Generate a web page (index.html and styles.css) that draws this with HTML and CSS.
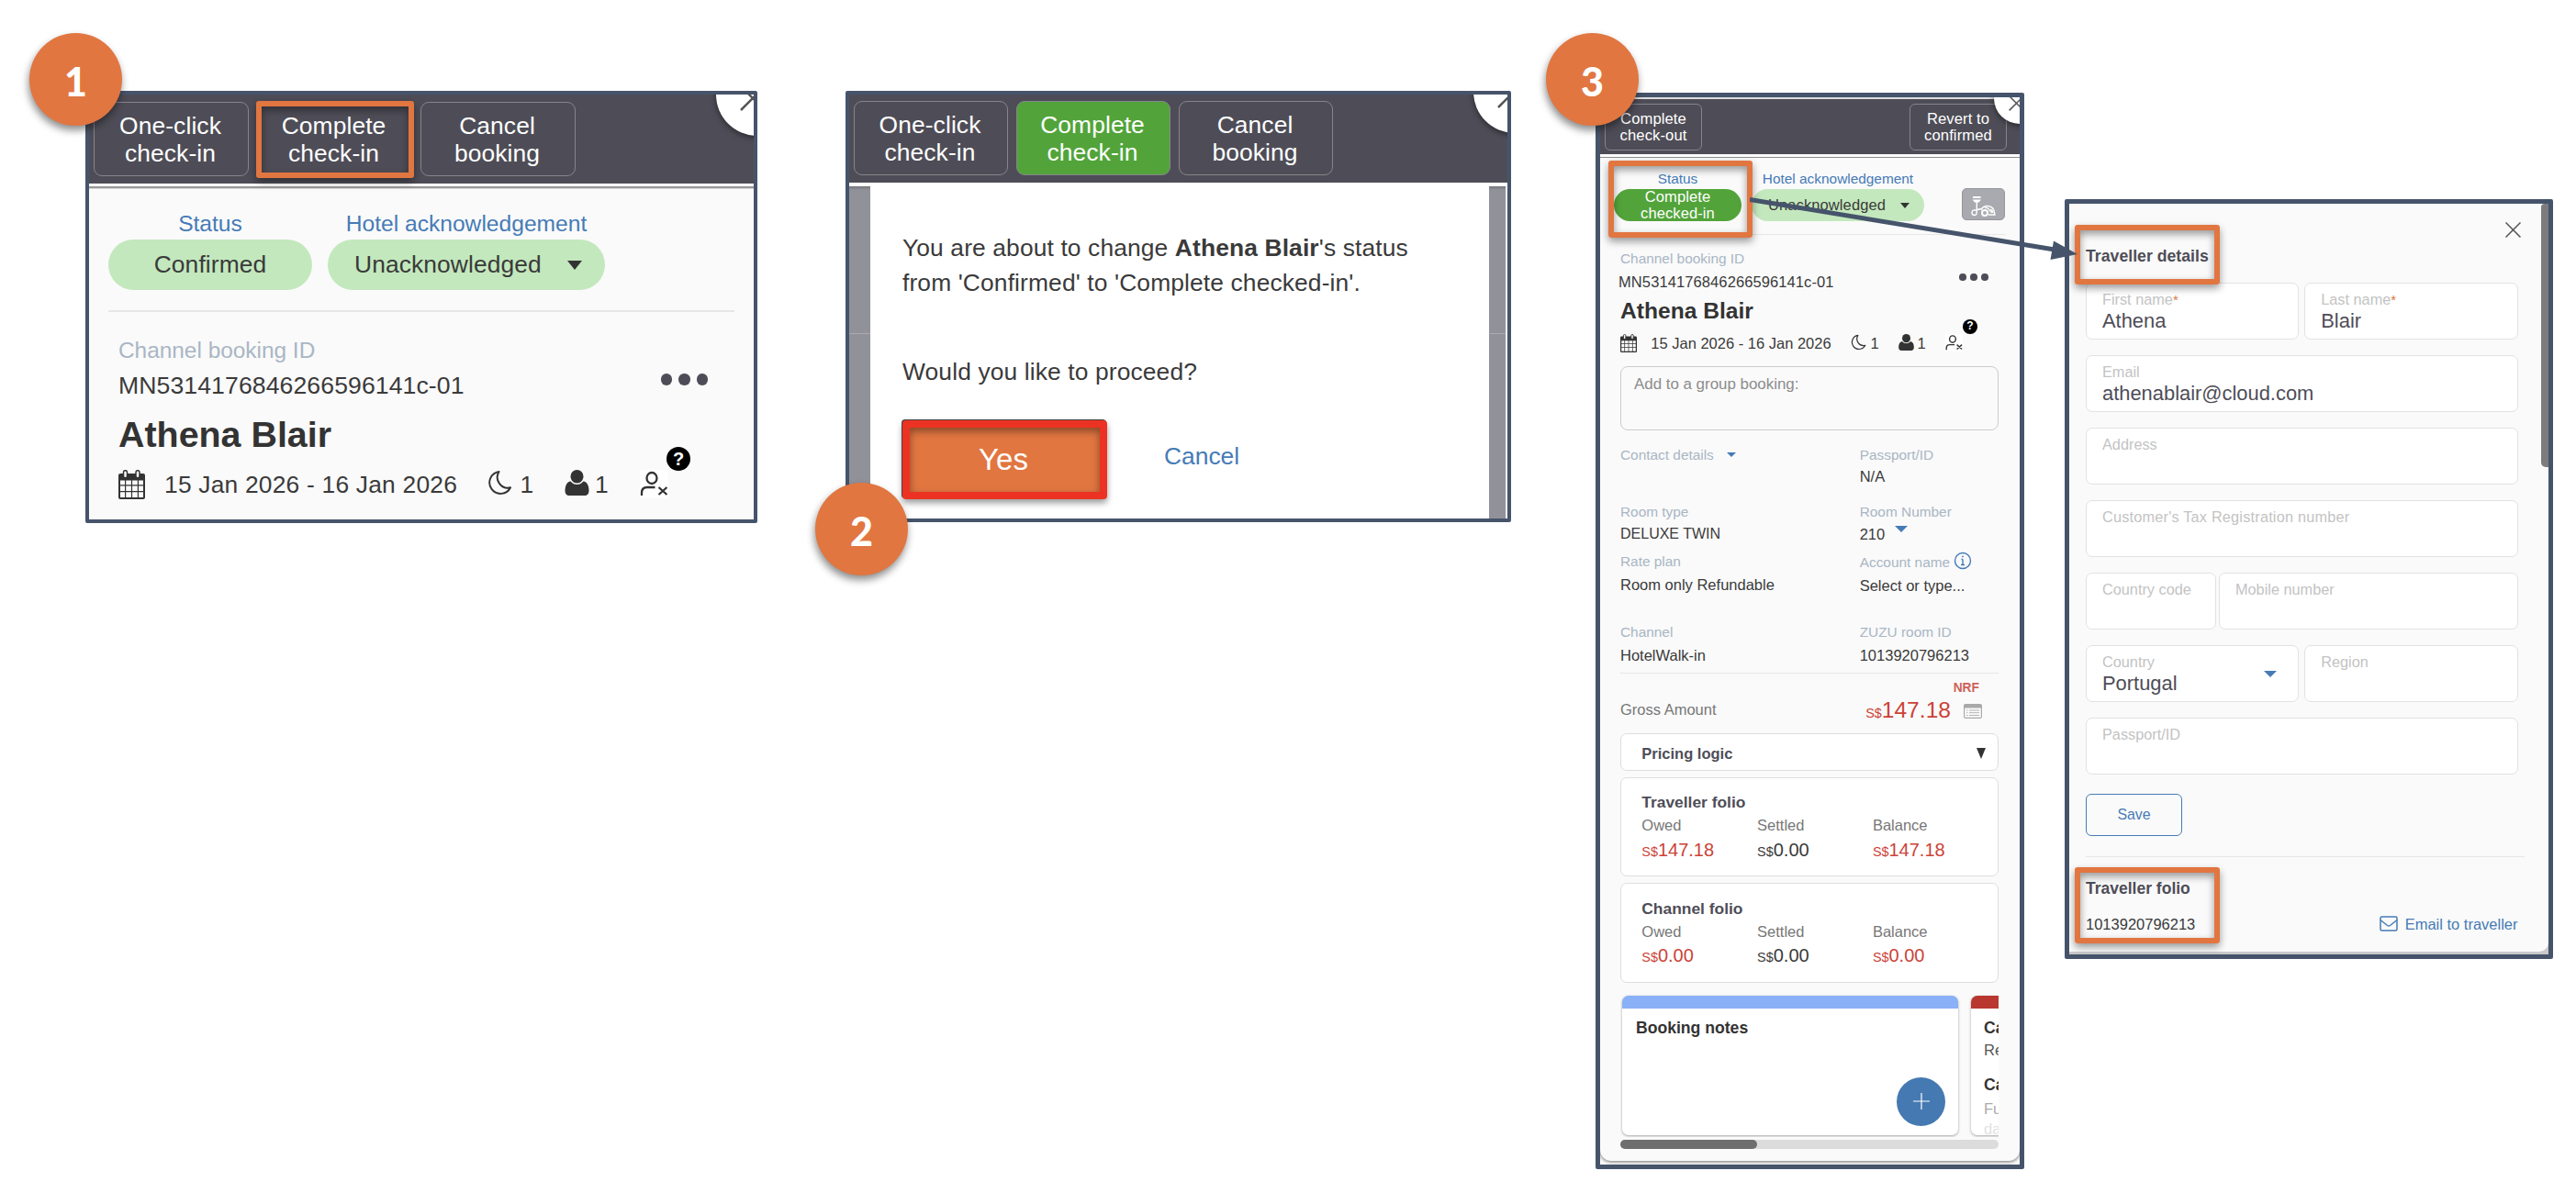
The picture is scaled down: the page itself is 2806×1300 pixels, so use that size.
FILE: index.html
```html
<!DOCTYPE html>
<html lang="en">
<head>
    <meta charset="UTF-8">
    <meta name="viewport" content="width=device-width, initial-scale=1.0">
    <title>Complete check-in</title>
    <link rel="stylesheet" href="styles.css">
</head>
<body>

<!-- Shared icons -->
<svg class="sprite">
    <symbol id="calendar" viewBox="0 0 29 32">
        <path fill="#333" d="M2 4h25a2 2 0 0 1 2 2v24a2 2 0 0 1-2 2H2a2 2 0 0 1-2-2V6a2 2 0 0 1 2-2z"/>
        <path fill="#fafafa" d="M2 11.500h5v4.800H2zM8.200 11.500h5.700v4.800H8.200zM15.100 11.500h5.700v4.800h-5.700zM22 11.500h5v4.800h-5zM2 17.500h5v5.500H2zM8.200 17.500h5.700v5.500H8.200zM15.100 17.500h5.700v5.500h-5.700zM22 17.500h5v5.500h-5zM2 24.200h5V30H2zM8.200 24.200h5.700V30H8.200zM15.100 24.200h5.700V30h-5.700zM22 24.200h5V30h-5z"/>
        <rect x="5.500" y="0.700" width="4" height="8" rx="2" fill="#fafafa" stroke="#333" stroke-width="1.500"/>
        <rect x="19" y="0.700" width="4" height="8" rx="2" fill="#fafafa" stroke="#333" stroke-width="1.500"/>
    </symbol>
    <symbol id="moon" viewBox="0 0 28 28">
        <path fill="none" stroke="#333" stroke-width="2" stroke-linejoin="round" d="M13 1.500A12.500 12.500 0 1 0 26 19.500A12 12 0 0 1 13 1.500z"/>
    </symbol>
    <symbol id="person" viewBox="0 0 26 28">
        <path fill="#333" d="M13 0a7 7 0 0 1 7 7c0 4-3 7.500-7 7.500S6 11 6 7a7 7 0 0 1 7-7z"/>
        <path fill="#333" d="M6 12.500c2 2.500 4.500 3.500 7 3.500s5-1 7-3.500c4 .5 6 4.500 6 10.500 0 3-2 5-4.500 5h-17C2 28 0 26 0 23c0-6 2-10 6-10.500z"/>
    </symbol>
    <symbol id="userx" viewBox="0 0 31 31">
        <path fill="#fff" d="M0 0h31v31H0z"/>
        <g fill="none" stroke="#333" stroke-width="2.300">
            <ellipse cx="13" cy="9" rx="5.500" ry="6"/>
            <path d="M2 28v-3c0-4 2.500-6 6-6h8.500M20.500 19l9 8M29.500 19l-9 8"/>
        </g>
    </symbol>
</svg>

<main class="board">

    <!-- Step 1 -->
    <section class="panel panel-confirm">
        <div class="screen">
            <div class="toolbar">
                <button class="action">One-click<br>check-in</button>
                <button class="action">Complete<br>check-in</button>
                <button class="action">Cancel<br>booking</button>
            </div>
            <div class="rule-bar"></div>
            <div class="booking">
                <div class="status-row">
                    <div class="status">
                        <span class="status-label">Status</span>
                        <span class="pill pill-status">Confirmed</span>
                    </div>
                    <div class="status">
                        <span class="status-label">Hotel acknowledgement</span>
                        <span class="pill pill-ack">Unacknowledged <i class="caret"></i></span>
                    </div>
                </div>
                <hr class="divider">
                <div class="guest">
                    <p class="label">Channel booking ID</p>
                    <div class="id-row">
                        <p class="booking-id">MN5314176846266596141c-01</p>
                        <div class="dots"><i></i><i></i><i></i></div>
                    </div>
                    <h2 class="guest-name">Athena Blair</h2>
                    <div class="stay">
                        <svg class="ico-cal"><use href="#calendar"/></svg>
                        <span>15 Jan 2026 - 16 Jan 2026</span>
                        <svg class="ico"><use href="#moon"/></svg>
                        <span>1</span>
                        <svg class="ico"><use href="#person"/></svg>
                        <span>1</span>
                        <svg class="ico-userx"><use href="#userx"/></svg>
                        <b class="help">?</b>
                    </div>
                </div>
            </div>
            <div class="close-tab"><svg viewBox="0 0 28 28"><path d="M1 1l26 26M27 1L1 27"/></svg></div>
        </div>
        <div class="frame frame-complete"></div>
        <div class="step step-1">1</div>
    </section>

    <!-- Step 2 -->
    <section class="panel panel-dialog">
        <div class="screen">
            <div class="toolbar">
                <button class="action">One-click<br>check-in</button>
                <button class="action action-on">Complete<br>check-in</button>
                <button class="action">Cancel<br>booking</button>
            </div>
            <div class="rule-white"></div>
            <div class="backdrop">
                <div class="dialog">
                    <p>You are about to change <b>Athena Blair</b>'s status<br>from 'Confirmed' to 'Complete checked-in'.</p>
                    <p class="question">Would you like to proceed?</p>
                    <div class="dialog-buttons">
                        <button class="yes">Yes</button>
                        <a class="cancel">Cancel</a>
                    </div>
                </div>
            </div>
            <div class="close-tab"><svg viewBox="0 0 28 28"><path d="M1 1l26 26M27 1L1 27"/></svg></div>
        </div>
        <div class="step step-2">2</div>
    </section>

    <!-- Step 3 -->
    <section class="panel panel-booking">
        <div class="screen">
            <div class="sheet">
                <div class="toolbar">
                    <button class="action">Complete<br>check-out</button>
                    <button class="action">Revert to<br>confirmed</button>
                </div>
                <div class="rule-bar"></div>
                <div class="booking">
                    <div class="status-row">
                        <div class="status">
                            <span class="status-label">Status</span>
                            <span class="pill pill-status pill-done">Complete<br>checked-in</span>
                        </div>
                        <div class="status">
                            <span class="status-label">Hotel acknowledgement</span>
                            <span class="pill pill-ack">Unacknowledged <i class="caret"></i></span>
                        </div>
                        <span class="cleaning">
                            <svg viewBox="0 0 47 35">
                                <g fill="none" stroke="#fff" stroke-width="1.400">
                                    <path d="M16.300 15v8c0 3 .5 6.500-2.600 6.500-2.200 0-2.700-1.500-2.700-2.700 0-2 1.500-3 3.300-2.800 3 .3 4-1.500 6.700-1.500"/>
                                    <path d="M21 24c1-3 3.500-4.500 7-4.500 5 0 7.500 3.500 8 9.500h-7"/>
                                    <circle cx="25" cy="27" r="3" stroke-width="2"/>
                                    <path d="M25 21.500c3-.5 5 1.500 5.500 4"/>
                                </g>
                                <path fill="#fff" d="M12 9h8.500v2H12zM11.500 12.500h9.500l-2.500 3h-4.500zM31 22.500c2 .5 3.300 2 3.500 4.500h-3z"/>
                            </svg>
                        </span>
                    </div>
                    <hr class="divider">
                    <div class="guest">
                        <p class="label">Channel booking ID</p>
                        <div class="id-row">
                            <p class="booking-id">MN5314176846266596141c-01</p>
                            <div class="dots"><i></i><i></i><i></i></div>
                        </div>
                        <h2 class="guest-name">Athena Blair</h2>
                        <div class="stay">
                            <svg class="ico-cal"><use href="#calendar"/></svg>
                            <span>15 Jan 2026 - 16 Jan 2026</span>
                            <svg class="ico"><use href="#moon"/></svg>
                            <span>1</span>
                            <svg class="ico"><use href="#person"/></svg>
                            <span>1</span>
                            <svg class="ico-userx"><use href="#userx"/></svg>
                            <b class="help">?</b>
                        </div>
                        <div class="group-box">Add to a group booking:</div>
                        <div class="details">
                            <div class="field">
                                <p class="label">Contact details <i class="caret caret-small"></i></p>
                            </div>
                            <div class="field field-passport">
                                <p class="label">Passport/ID</p>
                                <p class="value">N/A</p>
                            </div>
                            <div class="field">
                                <p class="label">Room type</p>
                                <p class="value tight">DELUXE TWIN</p>
                            </div>
                            <div class="field">
                                <p class="label">Room Number</p>
                                <p class="value">210 <i class="caret caret-room"></i></p>
                            </div>
                            <div class="field">
                                <p class="label">Rate plan</p>
                                <p class="value">Room only Refundable</p>
                            </div>
                            <div class="field field-account">
                                <p class="label">Account name
                                    <svg class="info" viewBox="0 0 20 20">
                                        <circle cx="10" cy="10" r="8.500"/>
                                        <path d="M10 8.500v6M8.500 8.500H10M8 14.500h4M9.200 5.500h1.600"/>
                                    </svg>
                                </p>
                                <p class="value">Select or type...</p>
                            </div>
                            <div class="field">
                                <p class="label">Channel</p>
                                <p class="value">HotelWalk-in</p>
                            </div>
                            <div class="field">
                                <p class="label">ZUZU room ID</p>
                                <p class="value">1013920796213</p>
                            </div>
                        </div>
                        <hr class="divider">
                        <p class="nrf">NRF</p>
                        <div class="gross">
                            <span class="gross-label">Gross Amount</span>
                            <span class="gross-amount"><small>S$</small>147.18</span>
                            <svg class="ledger" viewBox="0 0 20 16">
                                <rect x="0.600" y="0.600" width="18.800" height="14.800" rx="1.500" fill="#fafafa" stroke="#a9a9a9" stroke-width="1.200"/>
                                <path fill="#a9a9a9" d="M0 1h20v3.500H0z"/>
                                <path stroke="#b4b4b4" d="M3 7h1.500M6 7h11M3 9.700h1.500M6 9.700h11M3 12.500h1.500M6 12.500h11"/>
                            </svg>
                        </div>
                        <div class="box pricing"><b>Pricing logic</b><i class="caret caret-pricing"></i></div>
                        <div class="box folio">
                            <h3>Traveller folio</h3>
                            <div class="folio-grid">
                                <span>Owed</span><span>Settled</span><span>Balance</span>
                                <strong class="due"><small>S$</small>147.18</strong>
                                <strong><small>S$</small>0.00</strong>
                                <strong class="due"><small>S$</small>147.18</strong>
                            </div>
                        </div>
                        <div class="box folio">
                            <h3>Channel folio</h3>
                            <div class="folio-grid">
                                <span>Owed</span><span>Settled</span><span>Balance</span>
                                <strong class="due"><small>S$</small>0.00</strong>
                                <strong><small>S$</small>0.00</strong>
                                <strong class="due"><small>S$</small>0.00</strong>
                            </div>
                        </div>
                        <div class="cards">
                            <div class="card">
                                <h3>Booking notes</h3>
                                <button class="add"><svg viewBox="0 0 20 20"><path d="M1 10h18M10 1v18"/></svg></button>
                            </div>
                            <div class="card card-cancel">
                                <h3>Ca</h3>
                                <p>Re</p>
                                <h3 class="second">Ca</h3>
                                <p class="faded">Fu</p>
                                <p class="faded more">da</p>
                            </div>
                        </div>
                        <div class="scroll-track"><div class="scroll-thumb"></div></div>
                    </div>
                </div>
                <div class="close-tab"><svg viewBox="0 0 28 28"><path d="M1 1l26 26M27 1L1 27"/></svg></div>
            </div>
        </div>
        <div class="frame frame-status"></div>
        <div class="step step-3">3</div>
    </section>

    <!-- Traveller details opened from step 3 -->
    <section class="panel panel-traveller">
        <div class="screen">
            <div class="sheet">
                <h3 class="form-title">Traveller details</h3>
                <form class="form">
                    <div class="form-row">
                        <div class="input"><label>First name<em>*</em></label><span>Athena</span></div>
                        <div class="input"><label>Last name<em>*</em></label><span>Blair</span></div>
                    </div>
                    <div class="form-row">
                        <div class="input"><label>Email</label><span>athenablair@cloud.com</span></div>
                    </div>
                    <div class="form-row">
                        <div class="input"><label>Address</label></div>
                    </div>
                    <div class="form-row">
                        <div class="input"><label class="wide">Customer's Tax Registration number</label></div>
                    </div>
                    <div class="form-row form-row-phone">
                        <div class="input"><label>Country code</label></div>
                        <div class="input"><label>Mobile number</label></div>
                    </div>
                    <div class="form-row">
                        <div class="input input-select"><label>Country</label><span>Portugal</span><i class="caret"></i></div>
                        <div class="input"><label>Region</label></div>
                    </div>
                    <div class="form-row">
                        <div class="input"><label>Passport/ID</label></div>
                    </div>
                </form>
                <button class="save">Save</button>
                <hr class="divider">
                <h3 class="folio-title">Traveller folio</h3>
                <div class="folio-row">
                    <span>1013920796213</span>
                    <a class="email">
                        <svg viewBox="0 0 20 17"><rect x="1" y="1" width="18" height="15" rx="1.500"/><path d="M1 4.500l7.500 6q1.500 1 3 0l7.500-6"/></svg>
                        Email to traveller
                    </a>
                </div>
                <svg class="close-x" viewBox="0 0 17 17"><path d="M0.500 0.500l16 16M16.500 0.500l-16 16"/></svg>
            </div>
            <div class="side-scroll"></div>
        </div>
        <div class="frame frame-title"></div>
        <div class="frame frame-folio"></div>
    </section>

    <svg class="arrow" viewBox="0 0 360 72">
        <path d="M0 6.500L332 61" fill="none" stroke="#46546b" stroke-width="5"/>
        <path d="M357 66L331 51.500L327.500 72z" fill="#46546b"/>
    </svg>
</main>

</body>
</html>
```

FILE: styles.css
```css
* {
    box-sizing: border-box;
}

body {
    margin: 0;
    background: #fff;
    font-family: "Liberation Sans", Arial, sans-serif;
    color: #3a3a3a;
}

p, h2, h3, hr {
    margin: 0;
}

button {
    padding: 0;
    font-family: inherit;
}

.sprite {
    position: absolute;
    width: 0;
    height: 0;
}

.board {
    position: relative;
    display: flex;
    align-items: flex-start;
    width: 2806px;
    height: 1300px;
    overflow: hidden;
}

/* Panels */
.panel {
    position: relative;
    flex: none;
    border: 4px solid #46546b;
    border-radius: 2px;
    background: #fafafa;
}

.panel-confirm {
    width: 732px;
    height: 471px;
    margin: 99px 0 0 93px;
    font-size: 26.4px;
}

.panel-dialog {
    width: 725px;
    height: 470px;
    margin: 99px 0 0 96px;
    font-size: 26.4px;
}

.panel-booking {
    width: 467px;
    height: 1173px;
    margin: 101px 0 0 92px;
    border-width: 5px;
    font-size: 16.5px;
}

.panel-traveller {
    width: 532px;
    height: 828px;
    margin: 217px 0 0 44px;
    border-width: 5px;
}

.screen {
    position: relative;
    height: 100%;
    overflow: hidden;
}

/* Toolbar */
.toolbar {
    display: flex;
    gap: 9px;
    height: 97px;
    padding: 8px 5px;
    background: #4e4d57;
}

.action {
    width: 169px;
    height: 81px;
    padding-right: 2px;
    border: 1px solid #85858b;
    border-radius: 9px;
    background: none;
    color: #fff;
    font-size: 26.4px;
    line-height: 30px;
    letter-spacing: 0.1px;
}

.action-on {
    background: #52a43a;
}

.panel-dialog .toolbar {
    height: 96px;
    padding-top: 7px;
}

.panel-dialog .action {
    width: 168px;
}

.rule-bar {
    height: 6px;
    background: linear-gradient(#fff 3px, #999 3px, #999 5px, #d5d5d5 5px);
}

.rule-white {
    height: 4px;
    background: #fff;
}

.close-tab {
    position: absolute;
    top: -45px;
    right: -49px;
    width: 90px;
    height: 90px;
    border-radius: 50%;
    background: #fff;
    box-shadow: 0 2px 6px rgba(0, 0, 0, 0.5);
}

.close-tab svg {
    display: block;
    width: 28px;
    height: 28px;
    margin: 35px 0 0 26px;
    fill: none;
    stroke: #555;
    stroke-width: 2.5;
}

.panel-dialog .close-tab {
    top: -48px;
    right: -53px;
}

/* Status */
.booking {
    padding: 24px 21px 0;
}

.status-row {
    display: flex;
    gap: 17px;
}

.status {
    display: flex;
    flex-direction: column;
    align-items: center;
}

.status-label {
    color: #467bb6;
    font-size: 24.6px;
    line-height: 28px;
}

.pill {
    display: flex;
    align-items: center;
    height: 55px;
    margin-top: 3px;
    border-radius: 28px;
    background: #c3e8bd;
    letter-spacing: 0.1px;
}

.pill-status {
    justify-content: center;
    width: 222px;
}

.pill-ack {
    gap: 28px;
    width: 302px;
    padding-left: 29px;
}

.caret {
    width: 0;
    height: 0;
    border: solid transparent;
    border-width: 10px 8px 0;
    border-top-color: #333;
}

.divider {
    height: 2px;
    margin-top: 22px;
    border: 0;
    background: #e6e6e6;
}

/* Guest */
.guest {
    padding: 27px 11px 0;
}

.label {
    color: #a9b6c4;
    font-size: 24.4px;
    line-height: 30px;
}

.id-row {
    display: flex;
    justify-content: space-between;
    margin-top: 7px;
    line-height: 32px;
}

.booking-id {
    font-size: 26.6px;
    letter-spacing: 0.1px;
}

.dots {
    display: flex;
    gap: 7px;
    padding: 3px 18px 0 0;
}

.dots i {
    width: 12.500px;
    height: 12.500px;
    border-radius: 50%;
    background: #4e4d57;
}

.guest-name {
    margin-top: 14px;
    color: #333;
    font-size: 39.4px;
    line-height: 46px;
}

.stay {
    position: relative;
    display: grid;
    grid-template-columns: 50px 351.5px 36px 48px 33.5px 48.5px 31px;
    margin-top: 16px;
    line-height: 32px;
    white-space: nowrap;
}

.stay span {
    letter-spacing: 0.200px;
}

.ico-cal {
    width: 29px;
    height: 32px;
}

.ico {
    width: 27px;
    height: 28px;
}

.ico-userx {
    width: 31px;
    height: 31px;
}

.help {
    position: absolute;
    top: -25px;
    left: 597px;
    width: 26px;
    height: 26px;
    border-radius: 50%;
    background: #000;
    color: #fff;
    font-size: 20px;
    line-height: 26px;
    text-align: center;
}

/* Confirmation dialog */
.backdrop {
    height: 363px;
    padding: 0 18px 0 23px;
    background: linear-gradient(#77777d, #919199 4px, #919199 160px, #aaaab0 160px, #aaaab0 161px, #919199 161px);
    border-right: 2px solid #f4f4f4;
}

.dialog {
    height: 100%;
    padding: 48px 0 0 35px;
    background: #fff;
    letter-spacing: 0.12px;
    line-height: 38px;
    white-space: nowrap;
}

.question {
    margin-top: 59px;
}

.dialog-buttons {
    display: flex;
    align-items: center;
    margin-top: 34px;
}

.yes {
    width: 223px;
    height: 86px;
    padding-right: 3px;
    border: 8px solid #ec3323;
    border-radius: 4px;
    background: #e17641;
    box-shadow: -1px -1px 0 #444, 0 4px 7px rgba(0, 0, 0, 0.4), inset 0 4px 8px rgba(0, 0, 0, 0.4);
    color: #fff;
    font-size: 33px;
}

.cancel {
    margin: -8px 0 0 62px;
    color: #467bb6;
    letter-spacing: 0;
}

/* Booking sheet, compact version */
.panel-booking .screen {
    background: #fff;
}

.panel-booking .sheet {
    position: relative;
    height: 1159px;
    border-top: 2px solid #ddd;
    border-radius: 0 0 12px 12px;
    background: #fafafa;
    box-shadow: 0 1px 4px rgba(0, 0, 0, 0.6);
}

.panel-booking .toolbar {
    justify-content: space-between;
    height: 60px;
    padding: 5px 14px 0 5px;
}

.panel-booking .action {
    width: 106px;
    height: 51px;
    padding-right: 0;
    border-radius: 6px;
    font-size: 16.6px;
    line-height: 17.6px;
}

.panel-booking .rule-bar {
    height: 4px;
    background: linear-gradient(#fff 3px, #8b8b8b 3px);
}

.panel-booking .booking {
    padding: 14px 16px 0 15px;
}

.panel-booking .status-row {
    gap: 11px;
}

.panel-booking .status-label {
    font-size: 15.4px;
    line-height: 18px;
}

.panel-booking .pill {
    height: 35px;
    margin-top: 2px;
    line-height: 17.4px;
    text-align: center;
}

.panel-booking .pill-status {
    width: 139px;
}

.panel-booking .pill-done {
    background: #52a43a;
    color: #fff;
}

.panel-booking .pill-ack {
    gap: 16px;
    width: 188px;
    padding-left: 18px;
}

.panel-booking .pill-ack .caret {
    border-width: 6px 5px 0;
}

.cleaning {
    width: 47px;
    height: 35px;
    margin: 19px 0 0 30px;
    border: 1px solid #96969c;
    border-radius: 5px;
    background: #a9a9b0;
}

.cleaning svg {
    display: block;
    width: 47px;
    height: 35px;
    margin: -1px;
}

.panel-booking .divider {
    height: 1px;
    margin-top: 14px;
}

.panel-booking .guest {
    padding: 17px 7px 0 7px;
}

.panel-booking .label {
    font-size: 15.4px;
    line-height: 18px;
}

.panel-booking .id-row {
    margin: 6px 0 0 -2px;
    line-height: 20px;
}

.panel-booking .booking-id {
    font-size: 16.5px;
}

.panel-booking .dots {
    gap: 4.500px;
    padding: 1px 11px 0 0;
}

.panel-booking .dots i {
    width: 7.600px;
    height: 7.600px;
}

.panel-booking .guest-name {
    margin-top: 8px;
    font-size: 24.6px;
    line-height: 28px;
}

.panel-booking .stay {
    grid-template-columns: 33.3px 217.4px 21.8px 30.5px 20.5px 30.5px 19px;
    margin-top: 11px;
    line-height: 20px;
}

.panel-booking .stay span {
    letter-spacing: 0;
}

.panel-booking .ico-cal {
    width: 18px;
    height: 20px;
}

.panel-booking .ico {
    width: 17px;
    height: 18px;
}

.panel-booking .ico-userx {
    width: 19px;
    height: 19px;
}

.panel-booking .help {
    top: -16px;
    left: 373px;
    width: 15.6px;
    height: 15.6px;
    font-size: 12px;
    line-height: 15.6px;
}

.panel-booking .close-tab {
    top: -29px;
    right: -28px;
    width: 56px;
    height: 56px;
}

.panel-booking .close-tab svg {
    width: 17px;
    height: 17px;
    margin: 25px 0 0 16px;
}

.group-box {
    height: 70px;
    margin-top: 15px;
    padding: 10px 14px;
    border: 1px solid #ccc;
    border-radius: 8px;
    color: #8c8c8c;
    font-size: 16.9px;
    line-height: 18px;
}

.details {
    display: grid;
    grid-template-columns: 260.7px 1fr;
    grid-template-rows: 62px 54.7px 77px 53px;
    padding-top: 17.5px;
    white-space: nowrap;
}

.field .label {
    display: flex;
    align-items: center;
}

.field .value {
    display: flex;
    margin-top: 5.6px;
    line-height: 20px;
}

.field-passport .value {
    margin-top: 4.5px;
}

.field .tight {
    font-size: 16px;
}

.field-account {
    padding-top: 1.3px;
}

.caret-small {
    margin-left: 14px;
    border-width: 5px 5px 0;
    border-top-color: #467bb6;
}

.caret-room {
    margin: 1px 0 0 11px;
    border-width: 7px 7.5px 0;
    border-top-color: #467bb6;
}

.info {
    width: 20px;
    height: 20px;
    margin: -5px 0 -1px 4px;
    fill: none;
    stroke: #467bb6;
    stroke-width: 1.4;
}

.panel-booking .details + .divider {
    margin: 0;
}

.nrf {
    margin-top: 8px;
    padding-right: 21px;
    color: #cd6158;
    font-size: 13.8px;
    font-weight: bold;
    line-height: 16px;
    text-align: right;
}

.gross {
    display: flex;
    margin-top: 1px;
    line-height: 30px;
}

.gross-label {
    flex: 1;
    color: #777;
    line-height: 29px;
}

.gross-amount {
    color: #cc4237;
    font-size: 24.6px;
}

.gross-amount small,
.folio-grid small {
    font-size: 14.4px;
    line-height: 0;
}

.ledger {
    width: 20px;
    height: 16px;
    margin: 8px 18px 0 14px;
}

.box {
    border: 1px solid #dedede;
    border-radius: 7px;
    background: #fff;
}

.pricing {
    display: flex;
    align-items: center;
    justify-content: space-between;
    height: 41px;
    margin-top: 9.5px;
    padding: 4px 13px 0 22.3px;
    color: #4e4d57;
}

.caret-pricing {
    border-width: 12px 5.5px 0;
}

.folio {
    height: 108.5px;
    margin-top: 7px;
    padding: 15.5px 0 0 22.3px;
}

.folio h3 {
    color: #4e4d57;
    font-size: 17.4px;
    line-height: 22px;
}

.folio-grid {
    display: grid;
    grid-template-columns: 125.8px 125.8px 1fr;
    row-gap: 4.5px;
    margin-top: 4px;
    line-height: 20px;
}

.folio-grid span {
    color: #777;
}

.folio-grid strong {
    font-size: 20px;
    font-weight: normal;
    line-height: 24px;
}

.folio-grid .due {
    color: #cc4237;
}

.cards {
    display: flex;
    gap: 14px;
    height: 157px;
    margin-top: 11px;
    padding: 3px 0 2px 2px;
    overflow: hidden;
}

.card {
    flex: none;
    width: 366px;
    height: 152px;
    padding: 10px 14px 0 15px;
    border-top: 14px solid #8ab0f7;
    border-radius: 7px;
    background: #fff;
    box-shadow: 0 1px 3px rgba(0, 0, 0, 0.35);
}

.card h3 {
    color: #333;
    font-size: 17.6px;
    line-height: 22px;
}

.card p {
    color: #555;
    line-height: 20px;
}

.card-cancel {
    padding-left: 14px;
    border-top-color: #b8372f;
    overflow: hidden;
}

.card-cancel p {
    margin-top: 3px;
}

.card-cancel .second {
    margin-top: 17px;
}

.card-cancel .faded {
    margin-top: 5px;
    color: #aaa;
}

.card-cancel .more {
    margin-top: 2px;
    color: #e2e2e2;
}

.add {
    display: flex;
    align-items: center;
    justify-content: center;
    width: 53px;
    height: 53px;
    margin: 43px 0 0 auto;
    border: 0;
    border-radius: 50%;
    background: #4579b2;
}

.add svg {
    width: 20px;
    height: 20px;
    stroke: #fff;
    stroke-width: 1.2;
}

.scroll-track {
    height: 10px;
    margin-top: 3px;
    border-radius: 5px;
    background: #dcdcdc;
}

.scroll-thumb {
    width: 149px;
    height: 10px;
    border-radius: 5px;
    background: #6e6e6e;
}

/* Traveller details */
.panel-traveller .screen {
    background: #c9c9c9;
}

.panel-traveller .sheet {
    position: relative;
    height: 815px;
    padding: 46px 33.5px 0 18px;
    border-radius: 0 0 10px 0;
    background: #fafafa;
    font-size: 16.5px;
}

.form-title,
.folio-title {
    color: #4e4d57;
    font-size: 17.7px;
    line-height: 22px;
}

.form {
    display: grid;
    gap: 17.5px;
    margin-top: 18.3px;
}

.form-row {
    display: grid;
    grid-auto-flow: column;
    grid-auto-columns: 1fr;
    gap: 6px;
    height: 61.5px;
}

.form-row-phone {
    grid-template-columns: 142px 1fr;
    gap: 3px;
}

.input {
    position: relative;
    display: flex;
    flex-direction: column;
    padding: 8px 17px 0;
    border: 1px solid #e2e2e2;
    border-radius: 7px;
    background: #fff;
    white-space: nowrap;
}

.input label {
    color: #c3c3c3;
    font-size: 16.3px;
    line-height: 18px;
}

.input .wide {
    letter-spacing: 0.2px;
}

.input em {
    color: #e17641;
    font-style: normal;
    font-size: 15px;
    line-height: 0;
}

.input span {
    margin-top: 1.9px;
    color: #4e4d57;
    font-size: 21.9px;
    line-height: 26px;
}

.input-select .caret {
    position: absolute;
    top: 27px;
    right: 23px;
    border-width: 7px 7.5px 0;
    border-top-color: #467bb6;
}

.save {
    width: 105px;
    height: 46px;
    margin-top: 21px;
    border: 1px solid #467bb6;
    border-radius: 6px;
    background: none;
    color: #467bb6;
    font-size: 15.9px;
}

.panel-traveller .divider {
    height: 1px;
    margin-right: -7px;
}

.folio-title {
    margin-top: 23.5px;
    font-size: 17.5px;
}

.folio-row {
    display: flex;
    justify-content: space-between;
    margin-top: 18px;
    line-height: 20px;
}

.email {
    display: flex;
    gap: 8px;
    color: #467bb6;
}

.email svg {
    width: 20px;
    height: 17px;
    margin-top: 1px;
    fill: none;
    stroke: #467bb6;
    stroke-width: 1.500;
}

.close-x {
    position: absolute;
    top: 20px;
    right: 30px;
    width: 17px;
    height: 17px;
    stroke: #555;
    stroke-width: 1.500;
}

.side-scroll {
    position: absolute;
    top: 0;
    right: 0;
    width: 8px;
    height: 287px;
    border-radius: 4px 0 0 5px;
    background: #7c7c7c;
}

/* Callouts over the panels */
.frame {
    position: absolute;
    border: 6px solid #e17641;
    border-radius: 3px;
    box-shadow: 0 4px 8px rgba(0, 0, 0, 0.4), inset 0 4px 8px rgba(0, 0, 0, 0.4);
}

.frame-complete {
    top: 7px;
    left: 182px;
    width: 172px;
    height: 84px;
}

.frame-status {
    top: 69px;
    left: 9px;
    width: 157px;
    height: 84px;
}

.frame-title {
    top: 23px;
    left: 6px;
    width: 158px;
    height: 65px;
}

.frame-folio {
    top: 723px;
    left: 6px;
    width: 158px;
    height: 83px;
}

.step {
    position: absolute;
    width: 101px;
    height: 101px;
    border-radius: 50%;
    background: #e17641;
    box-shadow: -1px 5px 8px rgba(0, 0, 0, 0.45);
    color: #fff;
    font-family: Lato, sans-serif;
    font-size: 43px;
    font-weight: 900;
    line-height: 105px;
    text-align: center;
}

.step-1 {
    top: -67px;
    left: -65px;
}

.step-2 {
    top: 423px;
    left: -37px;
}

.step-3 {
    top: -70px;
    left: -59px;
}

.arrow {
    position: absolute;
    top: 211px;
    left: 1906px;
    width: 360px;
    height: 72px;
}
```
